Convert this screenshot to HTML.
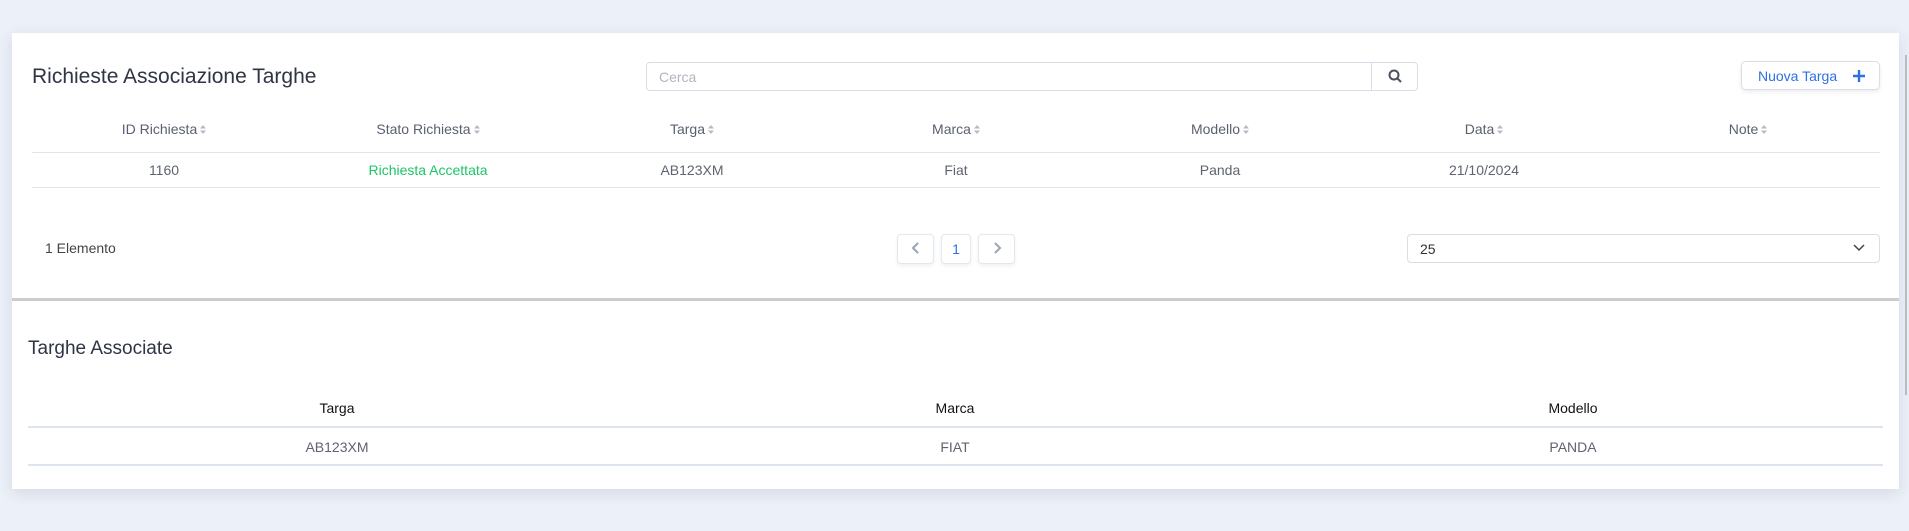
<!DOCTYPE html>
<html><head><meta charset="utf-8"><style>
*{box-sizing:border-box;margin:0;padding:0}
body{width:1909px;height:531px;background:#ecf0f8;font-family:"Liberation Sans",sans-serif;position:relative;overflow:hidden;color:#5e6470}
.card{position:absolute;left:12px;top:33px;width:1887px;height:456px;background:#fff;box-shadow:0 4px 14px rgba(40,50,80,.12)}
.abs{position:absolute}
.title{left:20px;top:32px;font-size:21px;color:#2f3545}
.search{left:634px;top:29px;width:772px;height:29px;border:1px solid #d8dee8;border-radius:4px}
.search span{position:absolute;left:12px;top:6px;font-size:14px;color:#b0b5bf}
.sbtn{position:absolute;right:0;top:0;width:46px;height:27px;border-left:1px solid #d8dee8}
.nbtn{left:1729px;top:28px;width:139px;height:29px;border:1px solid #d8dee8;border-radius:5px;box-shadow:0 2px 4px rgba(0,0,0,.08);color:#2f6fe4;font-size:14px;padding:6px 0 0 16px}
.nbtn svg{position:absolute;right:14px;top:8px}
.th,.td{position:absolute;font-size:14px;text-align:center;width:264px}
.th{color:#5a6070}
.s{display:inline-block;margin-left:3px;vertical-align:0}
.line{position:absolute;height:1px;background:#dde4ee}
.pg{position:absolute;top:201px;height:30px;width:37px;border:1px solid #e3e7ee;border-radius:4px;box-shadow:0 2px 4px rgba(0,0,0,.06);text-align:center;font-size:14px;padding-top:6px;color:#8a93a6}
.sel{left:1395px;top:201px;width:473px;height:29px;border:1px solid #d8dee8;border-radius:4px;font-size:14px;color:#333;padding:6px 12px}
.th2,.td2{position:absolute;width:618px;text-align:center;font-size:14px}
.th2{color:#111}
</style></head><body>
<div class="card">
<div class="abs title">Richieste Associazione Targhe</div>
<div class="abs search"><span>Cerca</span><div class="sbtn"><svg width="46" height="27"><circle cx="22" cy="12" r="4.5" fill="none" stroke="#4a5060" stroke-width="2"/><path d="M25.5 15.5l3.5 3.5" stroke="#4a5060" stroke-width="2"/></svg></div></div>
<div class="abs nbtn">Nuova Targa<svg width="12" height="12"><path d="M6 0v12M0 6h12" stroke="#2f6fe4" stroke-width="2.4"/></svg></div>

<div class="th" style="left:20px;top:88px">ID Richiesta<svg class="s" width="6" height="9"><path d="M0 3.5L3 0 6 3.5zM0 5.5L3 9 6 5.5z" fill="#b5bac4"/></svg></div>
<div class="th" style="left:284px;top:88px">Stato Richiesta<svg class="s" width="6" height="9"><path d="M0 3.5L3 0 6 3.5zM0 5.5L3 9 6 5.5z" fill="#b5bac4"/></svg></div>
<div class="th" style="left:548px;top:88px">Targa<svg class="s" width="6" height="9"><path d="M0 3.5L3 0 6 3.5zM0 5.5L3 9 6 5.5z" fill="#b5bac4"/></svg></div>
<div class="th" style="left:812px;top:88px">Marca<svg class="s" width="6" height="9"><path d="M0 3.5L3 0 6 3.5zM0 5.5L3 9 6 5.5z" fill="#b5bac4"/></svg></div>
<div class="th" style="left:1076px;top:88px">Modello<svg class="s" width="6" height="9"><path d="M0 3.5L3 0 6 3.5zM0 5.5L3 9 6 5.5z" fill="#b5bac4"/></svg></div>
<div class="th" style="left:1340px;top:88px">Data<svg class="s" width="6" height="9"><path d="M0 3.5L3 0 6 3.5zM0 5.5L3 9 6 5.5z" fill="#b5bac4"/></svg></div>
<div class="th" style="left:1604px;top:88px">Note<svg class="s" width="6" height="9"><path d="M0 3.5L3 0 6 3.5zM0 5.5L3 9 6 5.5z" fill="#b5bac4"/></svg></div>
<div class="line" style="left:20px;top:119px;width:1848px"></div>
<div class="td" style="left:20px;top:129px">1160</div>
<div class="td" style="left:284px;top:129px;color:#1ec56a">Richiesta Accettata</div>
<div class="td" style="left:548px;top:129px">AB123XM</div>
<div class="td" style="left:812px;top:129px">Fiat</div>
<div class="td" style="left:1076px;top:129px">Panda</div>
<div class="td" style="left:1340px;top:129px">21/10/2024</div>
<div class="line" style="left:20px;top:154px;width:1848px"></div>

<div class="abs" style="left:33px;top:207px;font-size:14px;color:#444">1 Elemento</div>
<div class="pg" style="left:885px"><svg width="12" height="14"><path d="M8 2L3 7l5 5" fill="none" stroke="#9aa2b3" stroke-width="2"/></svg></div>
<div class="pg" style="left:929px;width:30px;color:#2f6fe4">1</div>
<div class="pg" style="left:966px"><svg width="12" height="14"><path d="M4 2l5 5-5 5" fill="none" stroke="#9aa2b3" stroke-width="2"/></svg></div>
<div class="abs sel">25<svg class="abs" style="right:14px;top:9px" width="12" height="8"><path d="M1 1l5 5 5-5" fill="none" stroke="#444" stroke-width="1.5"/></svg></div>

<div class="abs" style="left:0;top:265px;width:1887px;height:3px;background:#cdcdcd"></div>
<div class="abs" style="left:16px;top:305px;font-size:19px;color:#2f3545">Targhe Associate</div>
<div class="th2" style="left:16px;top:367px">Targa</div>
<div class="th2" style="left:634px;top:367px">Marca</div>
<div class="th2" style="left:1252px;top:367px">Modello</div>
<div class="line" style="left:16px;top:393px;width:1855px;height:2px"></div>
<div class="td2" style="left:16px;top:406px">AB123XM</div>
<div class="td2" style="left:634px;top:406px">FIAT</div>
<div class="td2" style="left:1252px;top:406px">PANDA</div>
<div class="line" style="left:16px;top:431px;width:1855px;height:2px"></div>
</div>
<div class="abs" style="left:1905px;top:55px;width:2px;height:340px;background:#bbb"></div>
</body></html>
